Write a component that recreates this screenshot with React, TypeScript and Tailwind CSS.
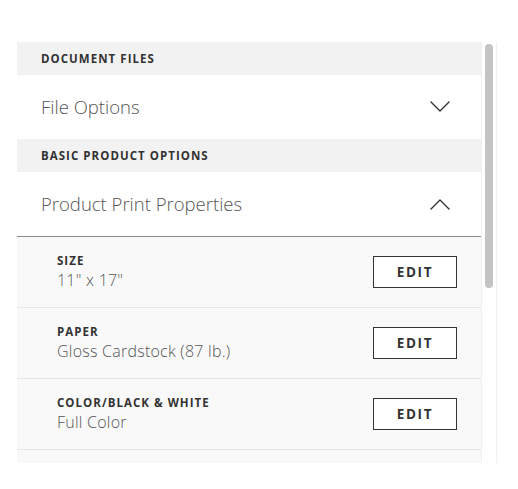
const font = { fontFamily: '"Open Sans", "Liberation Sans", sans-serif' };

interface PropertyRow {
  label: string;
  value: string;
}

const properties: PropertyRow[] = [
  { label: "Size", value: '11" x 17"' },
  { label: "Paper", value: "Gloss Cardstock (87 lb.)" },
  { label: "Color/Black & White", value: "Full Color" },
];

function Chevron({ up }: { up?: boolean }) {
  return (
    <svg width="20" height="12" viewBox="0 0 20 12" fill="none" className="text-[#333]">
      <polyline
        points={up ? "1,11 10,2 19,11" : "1,1 10,10 19,1"}
        stroke="currentColor"
        strokeWidth="1.4"
        strokeLinecap="round"
        strokeLinejoin="round"
      />
    </svg>
  );
}

function SectionHeader({ title }: { title: string }) {
  return (
    <div className="flex h-[33px] items-center bg-[#f2f2f2] px-6">
      <span className="text-[11.5px] font-bold uppercase tracking-[0.09em] text-[#333]">{title}</span>
    </div>
  );
}

function AccordionRow({ title, open }: { title: string; open?: boolean }) {
  return (
    <div
      className={
        open
          ? "flex h-[65px] items-center justify-between border-b border-[#8a8a8a] bg-white pl-6 pr-[30px]"
          : "flex h-[64px] items-center justify-between bg-white pl-6 pr-[30px]"
      }
    >
      <span className="text-[18.5px] font-light text-[#555]">{title}</span>
      <div className="pr-[1px]">
        <Chevron up={open} />
      </div>
    </div>
  );
}

export default function App() {
  return (
    <div className="min-h-screen bg-white pl-[17px] pt-[42px]" style={font}>
      <div className="flex h-[421px] w-[480px]">
        <div className="w-[464px] overflow-hidden">
          <SectionHeader title="Document Files" />
          <AccordionRow title="File Options" />
          <SectionHeader title="Basic Product Options" />
          <AccordionRow title="Product Print Properties" open />
          <div className="bg-[#f9f9f9]">
            {properties.map((row) => (
              <div
                key={row.label}
                className="flex h-[71px] items-center justify-between border-b border-[#e6e6e6] pl-10 pr-6"
              >
                <div className="flex flex-col">
                  <span className="text-[11.5px] font-bold uppercase leading-[16px] tracking-[0.09em] text-[#333]">
                    {row.label}
                  </span>
                  <span className="text-[16px] font-light leading-[22px] tracking-[0.015em] text-[#555]">
                    {row.value}
                  </span>
                </div>
                <button
                  type="button"
                  className="flex h-[32px] w-[84px] items-center justify-center border border-[#333] bg-white text-[13.5px] font-bold tracking-[0.12em] text-[#333]"
                >
                  EDIT
                </button>
              </div>
            ))}
            <div className="h-[40px]" />
          </div>
        </div>
        <div className="flex w-[16px] justify-center border-x border-[#f0f0f0] bg-white pt-[2px]">
          <div className="h-[244px] w-[8px] rounded-full bg-[#c4c4c4]" />
        </div>
      </div>
    </div>
  );
}
